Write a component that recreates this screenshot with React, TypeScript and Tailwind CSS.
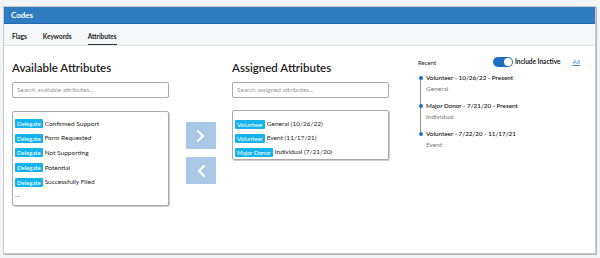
import React from "react";

const available = [
  "Confirmed Support",
  "Form Requested",
  "Not Supporting",
  "Potential",
  "Successfully Filed",
];

const assigned = [
  { tag: "Volunteer", label: "General (10/26/22)" },
  { tag: "Volunteer", label: "Event (11/17/21)" },
  { tag: "Major Donor", label: "Individual (7/21/20)" },
];

const recent = [
  { title: "Volunteer - 10/26/22 - Present", sub: "General" },
  { title: "Major Donor - 7/21/20 - Present", sub: "Individual" },
  { title: "Volunteer - 7/22/20 - 11/17/21", sub: "Event" },
];

const Badge = ({ text }: { text: string }) => (
  <span className="bg-[#14b3ec] text-white text-[6px] leading-[9px] px-[2px] rounded-[1px] mr-[2px]">
    {text}
  </span>
);

export default function App() {
  return (
    <div
      className="w-[600px] h-[258px] bg-[#f3f4f7] pt-[6px] pl-[3px] text-[#222]"
      style={{ fontFamily: "Lato, 'Open Sans', sans-serif" }}
    >
      <div className="w-[593px] h-[248px] bg-white border border-[#c9c9c9] shadow-[1px_1px_0_#b5b5b5] flex flex-col">
        <div className="h-[17px] bg-[#2f7dc0] border-b border-[#1f6cb3] text-white text-[8px] font-bold flex items-center px-[7px]">
          Codes
        </div>
        <div className="h-[22px] bg-[#f5f6f8] border-b border-[#e6e7ea] flex items-end gap-[16px] px-[8px] text-[6.5px] font-bold">
          <span className="pb-[3px]">Flags</span>
          <span className="pb-[3px]">Keywords</span>
          <span className="pb-[2px] border-b border-[#333]">Attributes</span>
        </div>
        <div className="flex pt-[14px] pl-[8px]">
          <div className="w-[157px]">
            <div className="text-[11.5px] font-semibold leading-[16px] h-[18px]">Available Attributes</div>
            <div className="mt-[4px] h-[16px] border border-[#aaa] rounded-[2px] text-[6.3px] text-[#999] flex items-center px-[4px]">
              Search available attributes...
            </div>
            <div className="mt-[13px] h-[95px] border border-[#aaa] rounded-[2px] shadow-[1px_1px_0_#ccc] pt-[6px] pl-[2px] flex flex-col gap-[3.7px] text-[6.5px]">
              {available.map((a) => (
                <div key={a} className="flex items-center h-[11px]">
                  <Badge text="Delegate" />
                  {a}
                </div>
              ))}
              <div className="h-[11px] leading-[8px]">...</div>
            </div>
          </div>
          <div className="w-[63px] flex flex-col items-center pt-[62px] gap-[8px]">
            <div className="w-[30px] h-[27px] bg-[#a9c8e6] flex items-center justify-center">
              <svg width="10" height="14" viewBox="0 0 10 14" fill="none" stroke="white" strokeWidth="2.4" strokeLinecap="round" strokeLinejoin="round">
                <path d="M2 2l5 5-5 5" />
              </svg>
            </div>
            <div className="w-[30px] h-[27px] bg-[#a9c8e6] flex items-center justify-center">
              <svg width="10" height="14" viewBox="0 0 10 14" fill="none" stroke="white" strokeWidth="2.4" strokeLinecap="round" strokeLinejoin="round">
                <path d="M8 2L3 7l5 5" />
              </svg>
            </div>
          </div>
          <div className="w-[157px]">
            <div className="text-[11.5px] font-semibold leading-[16px] h-[18px]">Assigned Attributes</div>
            <div className="mt-[4px] h-[16px] border border-[#aaa] rounded-[2px] text-[6.3px] text-[#999] flex items-center px-[4px]">
              Search assigned attributes...
            </div>
            <div className="mt-[12px] h-[50px] border border-[#aaa] rounded-[2px] shadow-[1px_1px_0_#ccc] pt-[8px] pl-[2px] flex flex-col gap-[4px] text-[6.5px]">
              {assigned.map((a) => (
                <div key={a.label} className="flex items-center h-[10px]">
                  <Badge text={a.tag} />
                  {a.label}
                </div>
              ))}
            </div>
          </div>
          <div className="ml-[29px] w-[168px] -mt-[4px]">
            <div className="flex items-center text-[6px] h-[12px]">
              <span>Recent</span>
              <div className="ml-auto w-[20px] h-[10px] rounded-full bg-[#1f6fc0] relative mr-[2px]">
                <div className="absolute right-[1px] top-[1px] w-[8px] h-[8px] rounded-full bg-white" />
              </div>
              <span className="font-bold text-[6.5px]">Include Inactive</span>
              <span className="ml-[12px] mr-[6px] text-[#3a8ee0] text-[6.5px] underline">All</span>
            </div>
            <div className="mt-[5px] ml-[1px] relative">
              <div className="absolute left-[1px] top-[4px] w-[1px] h-[56px] bg-[#999]" />
              {recent.map((r) => (
                <div key={r.title} className="flex flex-col h-[28px]">
                  <div className="flex items-center h-[9px]">
                    <span className="w-[4px] h-[4px] rounded-full bg-[#1f6fc0] relative -left-[0.5px]" />
                    <span className="ml-[3px] text-[6.3px] font-semibold">{r.title}</span>
                  </div>
                  <span className="ml-[7px] mt-[2px] text-[6.5px] text-[#777]">{r.sub}</span>
                </div>
              ))}
            </div>
          </div>
        </div>
      </div>
    </div>
  );
}
